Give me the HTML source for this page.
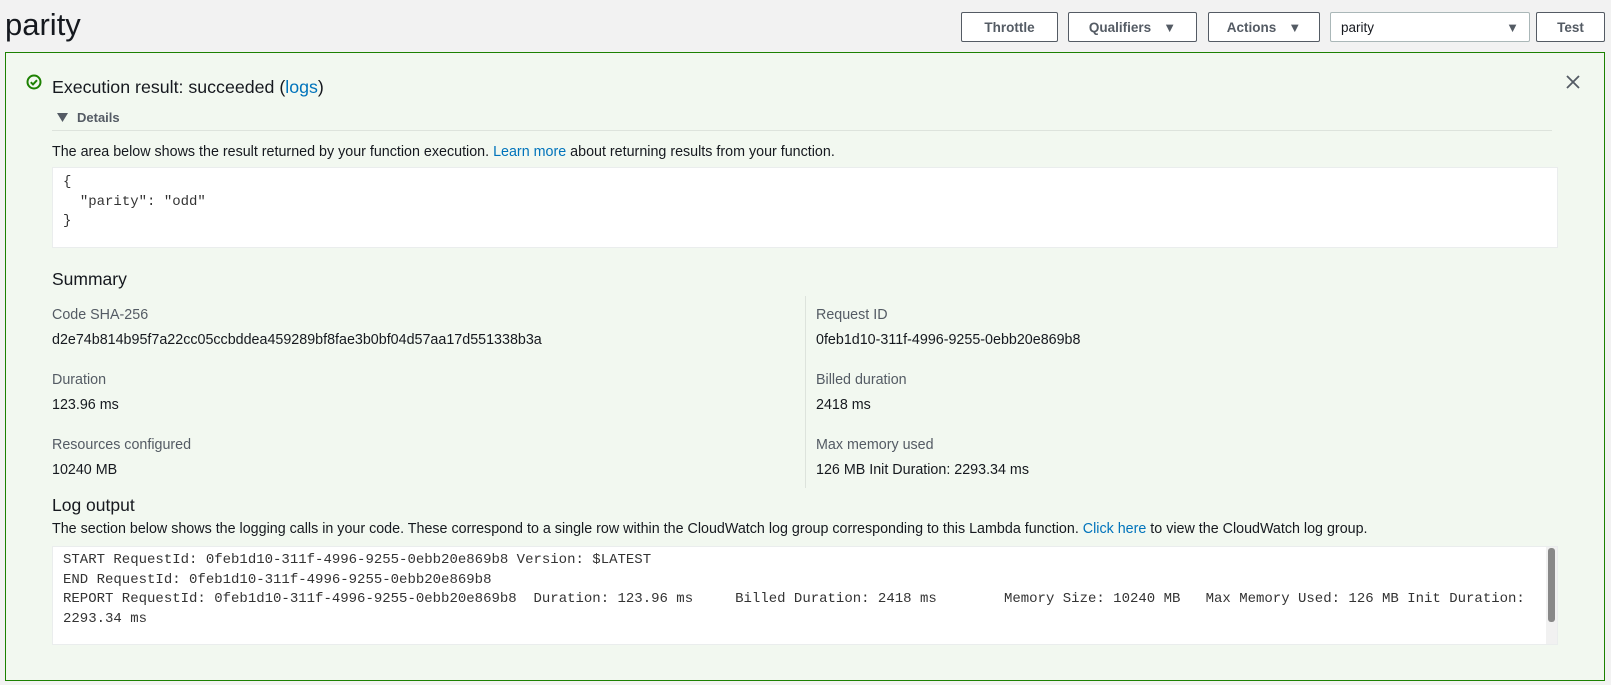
<!DOCTYPE html>
<html><head><meta charset="utf-8"><style>
*{margin:0;padding:0;box-sizing:border-box}
body{width:1611px;height:685px;background:#f2f2f2;font-family:"Liberation Sans",sans-serif;color:#16191f;position:relative;overflow:hidden;font-size:14.3px}
.a{position:absolute;white-space:nowrap}
.btn{position:absolute;top:12px;height:30px;border:1px solid #545b64;background:#fff;border-radius:2px;font-weight:bold;color:#545b64;font-size:13.5px;display:flex;align-items:center;justify-content:center;gap:12px}
.tri{font-size:13px}
#panel{position:absolute;left:5px;top:52px;width:1600px;height:629px;border:1px solid #1d8102;background:#f2f8f0}
a{color:#0073bb;text-decoration:none}
.lbl{color:#545b64}
.box{position:absolute;left:52px;width:1506px;background:#fff;border:1px solid #eaeded;font-family:"Liberation Mono",monospace;font-size:14px;color:#333}
pre{font-family:"Liberation Mono",monospace;font-size:14px;white-space:pre-wrap;tab-size:8;line-height:19.5px;color:#333}
</style></head><body>
<div class="a" style="left:5px;top:7px;font-size:31px">parity</div>
<div class="btn" style="left:961px;width:97px">Throttle</div>
<div class="btn" style="left:1068px;width:129px">Qualifiers <span class="tri">▼</span></div>
<div class="btn" style="left:1208px;width:112px">Actions <span class="tri">▼</span></div>
<div class="btn" style="left:1330px;width:200px;border-color:#aab7b8;justify-content:space-between;padding:0 10px;font-weight:normal;color:#16191f">parity <span class="tri" style="color:#545b64">▼</span></div>
<div class="btn" style="left:1536px;width:69px">Test</div>
<div id="panel"></div>
<svg class="a" style="left:26px;top:74px" width="16" height="16" viewBox="0 0 16 16"><circle cx="8" cy="8" r="6.5" fill="none" stroke="#1d8102" stroke-width="2"/><path d="M4.8 8.2l2.2 2.2 4-4.2" fill="none" stroke="#1d8102" stroke-width="2"/></svg>
<div class="a" style="left:52px;top:77px;font-size:17.8px">Execution result: succeeded (<a>logs</a>)</div>
<svg class="a" style="left:1566px;top:75px" width="14" height="14" viewBox="0 0 14 14"><path d="M1 1L13 13M13 1L1 13" stroke="#545b64" stroke-width="1.8"/></svg>
<svg class="a" style="left:57px;top:113px" width="11" height="9" viewBox="0 0 11 9"><path d="M0 0H11L5.5 9Z" fill="#545b64"/></svg>
<div class="a" style="left:77px;top:110px;font-weight:bold;color:#545b64;font-size:13px">Details</div>
<div class="a" style="left:52px;top:130px;width:1500px;height:1px;background:#dde3dc"></div>
<div class="a" style="left:52px;top:144px">The area below shows the result returned by your function execution. <a>Learn more</a> about returning results from your function.</div>
<div class="box" style="top:167px;height:81px;padding:5px 10px"><pre>{
  "parity": "odd"
}</pre></div>
<div class="a" style="left:52px;top:269px;font-size:17.5px">Summary</div>
<div class="a" style="left:805px;top:296px;width:1px;height:192px;background:#dde3dc"></div>
<div class="a lbl" style="left:52px;top:307px">Code SHA-256</div>
<div class="a" style="left:52px;top:332px">d2e74b814b95f7a22cc05ccbddea459289bf8fae3b0bf04d57aa17d551338b3a</div>
<div class="a lbl" style="left:52px;top:372px">Duration</div>
<div class="a" style="left:52px;top:397px">123.96 ms</div>
<div class="a lbl" style="left:52px;top:437px">Resources configured</div>
<div class="a" style="left:52px;top:462px">10240 MB</div>
<div class="a lbl" style="left:816px;top:307px">Request ID</div>
<div class="a" style="left:816px;top:332px">0feb1d10-311f-4996-9255-0ebb20e869b8</div>
<div class="a lbl" style="left:816px;top:372px">Billed duration</div>
<div class="a" style="left:816px;top:397px">2418 ms</div>
<div class="a lbl" style="left:816px;top:437px">Max memory used</div>
<div class="a" style="left:816px;top:462px">126 MB Init Duration: 2293.34 ms</div>
<div class="a" style="left:52px;top:495px;font-size:17.5px">Log output</div>
<div class="a" style="left:52px;top:521px">The section below shows the logging calls in your code. These correspond to a single row within the CloudWatch log group corresponding to this Lambda function. <a>Click here</a> to view the CloudWatch log group.</div>
<div class="box" style="top:546px;height:99px;padding:4px 20px 0 10px"><pre>START RequestId: 0feb1d10-311f-4996-9255-0ebb20e869b8 Version: $LATEST
END RequestId: 0feb1d10-311f-4996-9255-0ebb20e869b8
REPORT RequestId: 0feb1d10-311f-4996-9255-0ebb20e869b8	Duration: 123.96 ms	Billed Duration: 2418 ms	Memory Size: 10240 MB	Max Memory Used: 126 MB	Init Duration: 2293.34 ms</pre></div>
<div class="a" style="left:1546px;top:547px;width:11px;height:97px;background:#f1f1f1"></div>
<div class="a" style="left:1548px;top:548px;width:7px;height:74px;background:#888;border-radius:3px"></div>
</body></html>
